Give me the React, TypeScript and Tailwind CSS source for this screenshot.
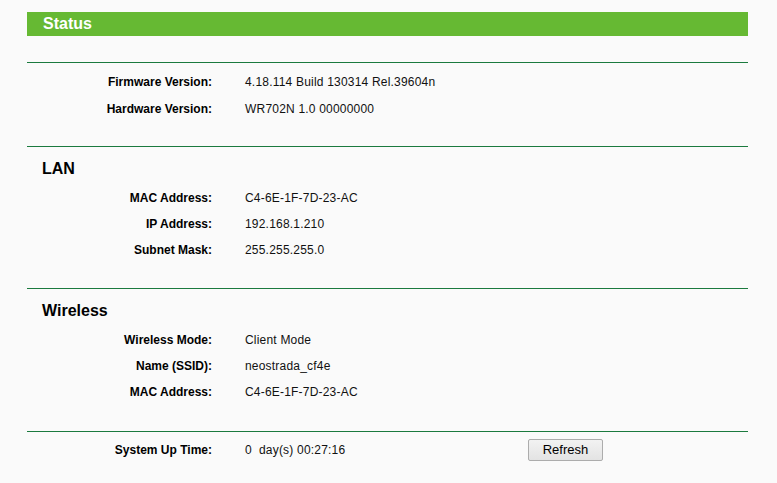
import React from 'react';

type Row = { label: string; value: string };

const InfoRow = ({ label, value }: Row) => (
  <div className="flex h-[26px] items-center">
    <div className="w-[185px] text-right font-bold text-black">{label}</div>
    <div className="pl-[33px] tracking-[0.2px] text-[#111]">{value}</div>
  </div>
);

const Divider = () => <div className="h-px w-full bg-[#1b7a3e]" />;

const SectionTitle = ({ title }: { title: string }) => (
  <div className="h-[20px] pl-[15px] text-[16px] font-bold leading-[20px] text-black">{title}</div>
);

export default function App() {
  return (
    <div className="min-h-[483px] w-[777px] bg-[#fafafa] pt-[12px] font-['Liberation_Sans',Arial,sans-serif] text-[12px]">
      <div className="ml-[27px] w-[721px]">
        <div className="flex h-[24px] items-center bg-[#66b933] pl-[16px] text-[16px] font-bold text-white">
          Status
        </div>

        <div className="mt-[26px]">
          <Divider />
        </div>
        <div className="pt-[5px]">
          <div className="flex h-[27px] items-center">
            <div className="w-[185px] text-right font-bold text-black">Firmware Version:</div>
            <div className="pl-[33px] tracking-[0.2px] text-[#111]">4.18.114 Build 130314 Rel.39604n</div>
          </div>
          <div className="flex h-[27px] items-center">
            <div className="w-[185px] text-right font-bold text-black">Hardware Version:</div>
            <div className="pl-[33px] tracking-[0.2px] text-[#111]">WR702N 1.0 00000000</div>
          </div>
        </div>

        <div className="mt-[24px]">
          <Divider />
        </div>
        <div className="pt-[12px]">
          <SectionTitle title="LAN" />
          <div className="pt-[6px]">
            <InfoRow label="MAC Address:" value="C4-6E-1F-7D-23-AC" />
            <InfoRow label="IP Address:" value="192.168.1.210" />
            <InfoRow label="Subnet Mask:" value="255.255.255.0" />
          </div>
        </div>

        <div className="mt-[25px]">
          <Divider />
        </div>
        <div className="pt-[12px]">
          <SectionTitle title="Wireless" />
          <div className="pt-[6px]">
            <InfoRow label="Wireless Mode:" value="Client Mode" />
            <InfoRow label="Name (SSID):" value="neostrada_cf4e" />
            <InfoRow label="MAC Address:" value="C4-6E-1F-7D-23-AC" />
          </div>
        </div>

        <div className="mt-[26px]">
          <Divider />
        </div>
        <div className="flex h-[36px] items-center">
          <div className="w-[185px] text-right font-bold text-black">System Up Time:</div>
          <div className="w-[316px] pl-[33px] whitespace-pre tracking-[0.2px] text-[#111]">0  day(s) 00:27:16</div>
          <button className="h-[22px] w-[75px] rounded-[2px] border border-[#acacac] bg-gradient-to-b from-[#f2f2f2] to-[#e3e3e3] text-[13px] text-black">
            Refresh
          </button>
        </div>
      </div>
    </div>
  );
}
